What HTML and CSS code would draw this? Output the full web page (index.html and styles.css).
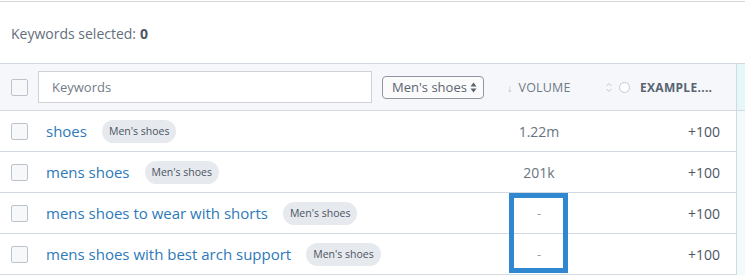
FILE: index.html
```html
<!DOCTYPE html>
<html>
<head>
<meta charset="utf-8">
<link rel="stylesheet" href="styles.css">
</head>
<body>
<div class="page">
  <div class="summary">Keywords selected: <b>0</b></div>
  <div class="table-wrap">
    <div class="table">
      <div class="row head">
        <div class="c-check"><span class="cb"></span></div>
        <div class="c-kw head-kw">
          <div class="input">Keywords</div>
          <div class="select">Men's shoes
            <svg width="7" height="11" viewBox="0 0 7 11"><path d="M3.5 0.5 L6.5 4.5 H0.5 Z M3.5 10.5 L6.5 6.5 H0.5 Z" fill="#5b6470"/></svg>
          </div>
        </div>
        <div class="c-vol head-vol"><span class="arrow">↓</span>VOLUME</div>
        <div class="c-ex head-ex">
          <svg width="8" height="11" viewBox="0 0 8 11"><path d="M1.5 4 L4 1.5 L6.5 4 M1.5 7 L4 9.5 L6.5 7" fill="none" stroke="#c3c8cf" stroke-width="1"/></svg>
          <span class="radio"></span>
          <b>EXAMPLE....</b>
        </div>
      </div>
      <div class="row">
        <div class="c-check"><span class="cb"></span></div>
        <div class="c-kw"><a class="kw">shoes</a><span class="badge">Men's shoes</span></div>
        <div class="c-vol">1.22m</div>
        <div class="c-ex">+100</div>
      </div>
      <div class="row">
        <div class="c-check"><span class="cb"></span></div>
        <div class="c-kw"><a class="kw">mens shoes</a><span class="badge">Men's shoes</span></div>
        <div class="c-vol">201k</div>
        <div class="c-ex">+100</div>
      </div>
      <div class="row">
        <div class="c-check"><span class="cb"></span></div>
        <div class="c-kw"><a class="kw">mens shoes to wear with shorts</a><span class="badge">Men's shoes</span></div>
        <div class="c-vol dash">-</div>
        <div class="c-ex">+100</div>
      </div>
      <div class="row">
        <div class="c-check"><span class="cb"></span></div>
        <div class="c-kw"><a class="kw">mens shoes with best arch support</a><span class="badge">Men's shoes</span></div>
        <div class="c-vol dash">-</div>
        <div class="c-ex">+100</div>
      </div>
      <div class="highlight"></div>
    </div>
    <div class="stripe">
      <div class="stripe-head"></div>
    </div>
  </div>
</div>
</body>
</html>
```
FILE: styles.css
```css
html, body {
  margin: 0;
  padding: 0;
  background: #fff;
}
body {
  font-family: "Open Sans", "Noto Sans", sans-serif;
  color: #5f6a78;
  overflow: hidden;
}
.page {
  margin-top: 1px;
  border-top: 1px solid #d3d7dc;
  width: 745px;
}
.summary {
  height: 61px;
  box-sizing: border-box;
  padding-left: 11px;
  padding-top: 1px;
  display: flex;
  align-items: center;
  font-size: 14px;
  color: #646e7b;
}
.summary b {
  margin-left: 4px;
  font-weight: 700;
  color: #4f5966;
}
.table-wrap {
  display: flex;
}
.table {
  position: relative;
  width: 736px;
  border-right: 1px solid #d3d9e0;
}
.stripe {
  flex: 1;
  background: #f3fafb;
}
.stripe-head {
  height: 48px;
  background: #e6f7f7;
  border-top: 1px solid #d3d9e0;
  border-bottom: 1px solid #d3d9e0;
  box-sizing: border-box;
}
.row {
  display: flex;
  align-items: center;
  height: 41px;
  box-sizing: border-box;
  border-bottom: 1px solid #d3d9e0;
}
.row.head {
  height: 48px;
  background: #f5f7fa;
  border-top: 1px solid #d3d9e0;
}
.c-check {
  width: 38px;
  padding-left: 11px;
  box-sizing: border-box;
  display: flex;
  align-items: center;
}
.cb {
  width: 17px;
  height: 17px;
  box-sizing: border-box;
  border: 1px solid #bcc3cc;
  border-radius: 2px;
  background: #f7f8fa;
}
.c-kw {
  width: 456px;
  display: flex;
  align-items: center;
  padding-left: 8px;
  box-sizing: border-box;
}
.head-kw {
  padding-left: 0;
}
.input {
  width: 334px;
  height: 32px;
  box-sizing: border-box;
  border: 1px solid #cfd3d8;
  background: #fff;
  font-size: 13px;
  color: #737c87;
  display: flex;
  align-items: center;
  padding-left: 13px;
}
.select {
  margin-left: 10px;
  width: 102px;
  height: 23px;
  box-sizing: border-box;
  border: 1px solid #8f969e;
  border-radius: 4px;
  display: flex;
  align-items: center;
  justify-content: space-between;
  padding: 0 6px 0 9px;
  font-size: 13px;
  color: #5b6470;
  background: #fbfbfc;
}
.kw {
  font-size: 15px;
  color: #2d79ba;
  text-decoration: none;
  margin-right: 15px;
}
.badge {
  display: inline-flex;
  align-items: center;
  height: 23px;
  padding: 0 7px;
  border-radius: 12px;
  background: #e6e9ee;
  font-size: 10.5px;
  color: #4b5462;
}
.c-vol {
  width: 90px;
  text-align: center;
  font-size: 14px;
  color: #6a7481;
}
.c-vol.dash {
  color: #9aa1aa;
  font-size: 13px;
}
.head-vol {
  font-size: 12.5px;
  color: #707a87;
  letter-spacing: 0.2px;
}
.head-vol .arrow {
  font-size: 10px;
  color: #a9b0b9;
  margin-right: 6px;
}
.c-ex {
  width: 152px;
  text-align: right;
  padding-right: 16px;
  box-sizing: border-box;
  font-size: 14px;
  color: #4d5665;
}
.head-ex {
  display: flex;
  align-items: center;
  text-align: left;
  padding-left: 21px;
  font-size: 12px;
}
.head-ex b {
  font-weight: 700;
  color: #5a6370;
  letter-spacing: 0.3px;
}
.radio {
  width: 9px;
  height: 9px;
  border: 1px solid #c3c8cf;
  border-radius: 50%;
  margin: 0 10px 0 6px;
  background: #fff;
}
.highlight {
  position: absolute;
  left: 509px;
  top: 130px;
  width: 59px;
  height: 80px;
  box-sizing: border-box;
  border: 5px solid #3088d0;
}
```
